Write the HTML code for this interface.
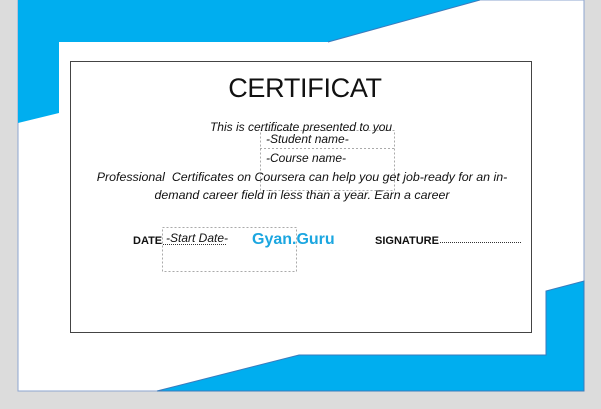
<!DOCTYPE html>
<html><head><style>
body{margin:0;width:601px;height:409px;background:#dcdcdc;position:relative;overflow:hidden;font-family:"Liberation Sans",sans-serif}
.t{position:absolute;white-space:nowrap;color:#111}
.i{font-style:italic;font-size:12px}
</style></head><body>
<svg width="601" height="409" style="position:absolute;left:0;top:0">
<rect x="18" y="0" width="566" height="391" fill="#fff" stroke="#8ea6cf" stroke-width="1"/>
<polygon points="18,0 480,0 328,42 59,42 59,113 18,123" fill="#00aeef"/>
<line x1="480" y1="0" x2="328" y2="42" stroke="#3a7bbd" stroke-width="1"/>
<polygon points="157,391 299,355 546,355 546,291 584,281 584,391" fill="#00aeef" stroke="#3a7bbd" stroke-width="1"/>
<rect x="70.5" y="61.5" width="461" height="271" fill="#fff" stroke="#444" stroke-width="1"/>
<rect x="260.5" y="130.5" width="134" height="60" fill="none" stroke="#aaa" stroke-dasharray="2,2"/>
<line x1="260" y1="148.5" x2="394" y2="148.5" stroke="#aaa" stroke-dasharray="2,2"/>
<rect x="162.5" y="227.5" width="134" height="44" fill="none" stroke="#aaa" stroke-dasharray="2,2"/>
<line x1="440" y1="242.5" x2="521" y2="242.5" stroke="#333" stroke-dasharray="1,1"/>
<line x1="163" y1="244.5" x2="226" y2="244.5" stroke="#333" stroke-dasharray="1,1"/>
</svg>
<div class="t" style="left:0;width:610px;text-align:center;top:73px;font-size:27px;letter-spacing:-0.3px">CERTIFICAT</div>
<div class="t i" style="left:0;width:602px;text-align:center;top:120px">This is certificate presented to you</div>
<div class="t i" style="left:266px;top:132px">-Student name-</div>
<div class="t i" style="left:266px;top:151px">-Course name-</div>
<div class="t i" style="left:0;width:604px;text-align:center;top:170px;font-size:12.4px">Professional&nbsp; Certificates on Coursera can help you get job-ready for an in-</div>
<div class="t i" style="left:0;width:604px;text-align:center;top:188px;font-size:12.4px">demand career field in less than a year. Earn a career</div>
<div class="t" style="left:133px;top:235px;font-size:11px;font-weight:bold">DATE</div>
<div class="t i" style="left:166px;top:231px">-Start Date-</div>
<div class="t" style="left:252px;top:231px;font-size:16px;font-weight:bold;color:#1ba6e0">Gyan.Guru</div>
<div class="t" style="left:375px;top:235px;font-size:11px;font-weight:bold">SIGNATURE</div>
</body></html>
